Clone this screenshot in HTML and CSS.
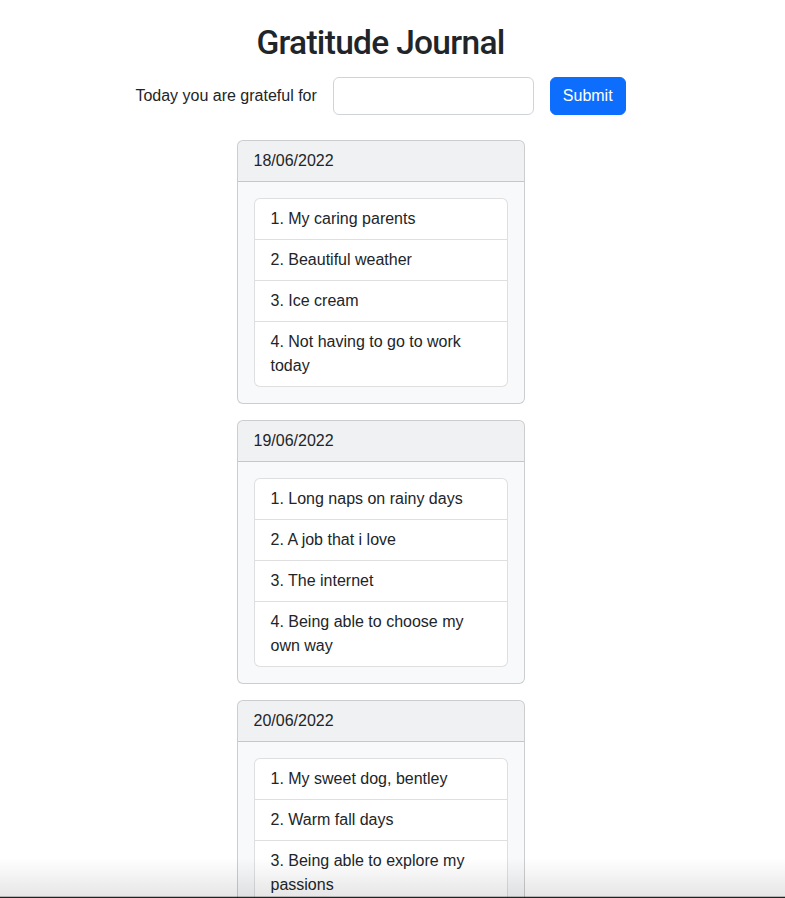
FILE: index.html
```html
<!DOCTYPE html>
<html lang="en">
<head>
<meta charset="utf-8">
<title>Gratitude Journal</title>
<link rel="stylesheet" href="styles.css">
</head>
<body>
<div class="page">
  <h1 class="title">Gratitude Journal</h1>
  <form class="entry-form">
    <label class="entry-label" for="grateful">Today you are grateful for</label>
    <input class="entry-input" id="grateful" type="text">
    <button class="btn-submit" type="button">Submit</button>
  </form>
  <div class="cards">
    <div class="card">
      <div class="card-header">18/06/2022</div>
      <div class="card-body">
        <ul class="list-group">
          <li class="list-item">1. My caring parents</li>
          <li class="list-item">2. Beautiful weather</li>
          <li class="list-item">3. Ice cream</li>
          <li class="list-item">4. Not having to go to work today</li>
        </ul>
      </div>
    </div>
    <div class="card">
      <div class="card-header">19/06/2022</div>
      <div class="card-body">
        <ul class="list-group">
          <li class="list-item">1. Long naps on rainy days</li>
          <li class="list-item">2. A job that i love</li>
          <li class="list-item">3. The internet</li>
          <li class="list-item">4. Being able to choose my own way</li>
        </ul>
      </div>
    </div>
    <div class="card">
      <div class="card-header">20/06/2022</div>
      <div class="card-body">
        <ul class="list-group">
          <li class="list-item">1. My sweet dog, bentley</li>
          <li class="list-item">2. Warm fall days</li>
          <li class="list-item">3. Being able to explore my passions</li>
          <li class="list-item">4. Coffee in the morning</li>
        </ul>
      </div>
    </div>
  </div>
</div>
<div class="bottom-fade"></div>
</body>
</html>
```
FILE: styles.css
```css
* { box-sizing: border-box; }
body {
  margin: 0;
  font-family: "Liberation Sans", Arial, sans-serif;
  font-size: 16px;
  line-height: 1.5;
  color: #212529;
  background: #fff;
}
.page {
  padding: 0 24px 40px 0;
}
.title {
  text-align: center;
  font-family: Roboto, "Liberation Sans", sans-serif;
  font-size: 33.5px;
  font-weight: 500;
  letter-spacing: -0.7px;
  line-height: 1.2;
  margin: 23px 0 14px;
}
.entry-form {
  display: flex;
  justify-content: center;
  align-items: center;
  gap: 16px;
}
.entry-label {
  font-size: 16px;
}
.entry-input {
  width: 201px;
  height: 38px;
  border: 1px solid #ced4da;
  border-radius: 6px;
  padding: 6px 12px;
  font: inherit;
  background: #fff;
}
.btn-submit {
  height: 38px;
  padding: 6px 12px;
  border: 1px solid #0d6efd;
  border-radius: 6px;
  background: #0d6efd;
  color: #fff;
  font: inherit;
}
.cards {
  display: flex;
  flex-direction: column;
  align-items: center;
  gap: 16px;
  margin-top: 25px;
}
.card {
  width: 288px;
  border: 1px solid rgba(0,0,0,0.175);
  border-radius: 6px;
  background: #f8f9fa;
  overflow: hidden;
}
.card-header {
  padding: 8px 16px;
  background: rgba(0,0,0,0.03);
  border-bottom: 1px solid rgba(0,0,0,0.175);
}
.card-body {
  padding: 16px;
}
.list-group {
  list-style: none;
  margin: 0;
  padding: 0;
  background: #fff;
  border: 1px solid rgba(0,0,0,0.125);
  border-radius: 6px;
}
.list-item {
  padding: 8px 16px;
  border-top: 1px solid rgba(0,0,0,0.125);
}
.list-item:first-child {
  border-top: none;
}
.bottom-fade {
  position: fixed;
  left: 0;
  right: 0;
  bottom: 0;
  height: 40px;
  background: linear-gradient(to bottom, #ffffff 0%, #e6e6e6 96%, #222 97%, #222 100%);
  mix-blend-mode: multiply;
  pointer-events: none;
}
```
